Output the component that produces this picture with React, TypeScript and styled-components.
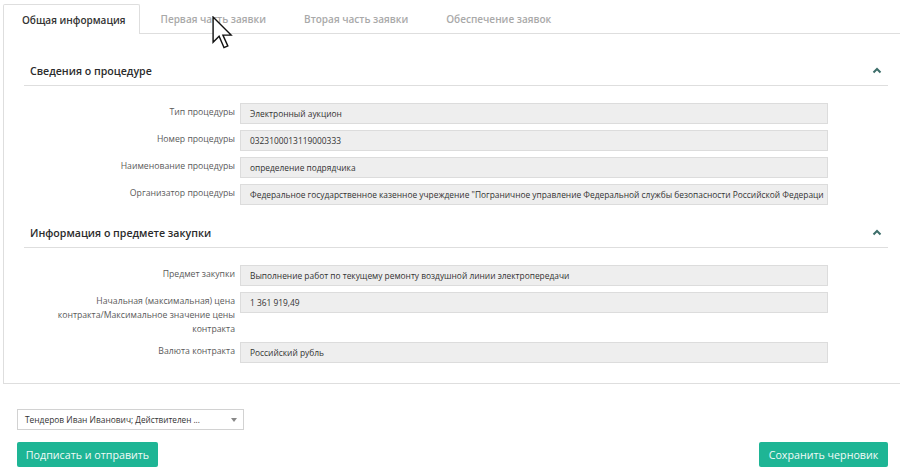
import React from "react";
import styled, { createGlobalStyle } from "styled-components";

const Global = createGlobalStyle`
  html, body { margin: 0; padding: 0; background: #fff; overflow: hidden; }
  body { font-family: "Open Sans", "Noto Sans", sans-serif; color: #333; }
  * { box-sizing: border-box; }
`;

const Page = styled.div`
  position: relative;
  width: 900px;
  height: 472px;
  padding: 3px 0 0 3px;
  overflow: hidden;
`;

const TabBar = styled.div`
  display: flex;
  align-items: flex-end;
  border-bottom: 1px solid #dedede;
  width: 910px;
`;

const Tab = styled.div<{ $active?: boolean }>`
  display: flex;
  align-items: center;
  height: 30px;
  margin-bottom: ${(p) => (p.$active ? "-1px" : "0")};
  margin-right: ${(p) => (p.$active ? "2px" : "0")};
  padding: ${(p) => (p.$active ? "0 13px 0 18px" : "0 18px")};
  font-size: 10px;
  font-weight: 600;
  color: ${(p) => (p.$active ? "#333" : "#a9a9a9")};
  background: #fff;
  border: 1px solid ${(p) => (p.$active ? "#dedede" : "transparent")};
  border-bottom: none;
  border-radius: 2px 2px 0 0;
  white-space: nowrap;
`;

const Panel = styled.div`
  width: 910px;
  border: 1px solid #dedede;
  border-top: none;
  padding: 22px 0 20px 0;
`;

const Section = styled.div`
  margin: 0 9px 0 20px;
  & + & {
    margin-top: 13px;
  }
`;

const SectionHeader = styled.div`
  display: flex;
  align-items: center;
  justify-content: space-between;
  height: 30px;
  padding: 0 6px;
  border-bottom: 1px solid #dedede;
  width: 864px;
`;

const SectionTitle = styled.div`
  font-size: 10.6px;
  font-weight: 600;
  color: #2b2b2b;
`;

const Chevron = styled.svg`
  width: 10px;
  height: 7px;
`;

const Fields = styled.div`
  display: grid;
  grid-template-columns: 211px 588px;
  column-gap: 5px;
  row-gap: 6px;
  padding-top: 17px;
`;

const Label = styled.div`
  text-align: right;
  font-size: 8.7px;
  line-height: 14px;
  padding: 2px 0 0 22px;
  color: #5a5a5a;
`;

const Value = styled.div`
  height: 21px;
  display: flex;
  align-items: center;
  padding-left: 9px;
  background: #eeeeee;
  border: 1px solid #dcdcdc;
  font-size: 8.4px;
  color: #333;
  white-space: nowrap;
  overflow: hidden;
`;

const Footer = styled.div`
  padding: 25px 12px 0 14px;
  display: flex;
  flex-direction: column;
  gap: 12px;
`;

const Select = styled.div`
  width: 227px;
  height: 21px;
  border: 1px solid #d2d2d2;
  display: flex;
  align-items: center;
  justify-content: space-between;
  padding: 0 6px 0 7px;
  font-size: 8.4px;
  color: #333;
  white-space: nowrap;
`;

const Small = styled.span`
  font-size: 8.2px;
`;

const Arrow = styled.span`
  width: 0;
  height: 0;
  border-left: 3px solid transparent;
  border-right: 3px solid transparent;
  border-top: 4px solid #888;
`;

const ButtonRow = styled.div`
  display: flex;
  justify-content: space-between;
`;

const Button = styled.button<{ $w: number }>`
  width: ${(p) => p.$w}px;
  height: 25px;
  background: #1eb595;
  border: none;
  border-radius: 2px;
  color: #f2fbf8;
  font-family: "Open Sans", "Noto Sans", sans-serif;
  font-size: 10.7px;
  padding: 0;
`;

const Cursor = styled.svg`
  position: absolute;
  left: 212px;
  top: 16px;
  width: 24px;
  height: 36px;
`;

const ChevronUp = () => (
  <Chevron viewBox="0 0 10 7">
    <path d="M1.5 5.5 L5 2 L8.5 5.5" fill="none" stroke="#3d6e6a" strokeWidth="2" />
  </Chevron>
);

const sec1 = [
  ["Тип процедуры", "Электронный аукцион"],
  ["Номер процедуры", "0323100013119000333"],
  ["Наименование процедуры", "определение подрядчика"],
  [
    "Организатор процедуры",
    "Федеральное государственное казенное учреждение \"Пограничное управление Федеральной службы безопасности Российской Федераци",
  ],
];

const sec2 = [
  ["Предмет закупки", "Выполнение работ по текущему ремонту воздушной линии электропередачи"],
  [
    "Начальная (максимальная) цена контракта/\u2060Максимальное значение цены контракта",
    "1 361 919,49",
  ],
  ["Валюта контракта", "Российский рубль"],
];

export default function App() {
  return (
    <Page>
      <Global />
      <TabBar>
        <Tab $active>Общая информация</Tab>
        <Tab>Первая часть заявки</Tab>
        <Tab>Вторая часть заявки</Tab>
        <Tab>Обеспечение заявок</Tab>
      </TabBar>
      <Panel>
        <Section>
          <SectionHeader>
            <SectionTitle>Сведения о процедуре</SectionTitle>
            <ChevronUp />
          </SectionHeader>
          <Fields>
            {sec1.map(([l, v]) => (
              <React.Fragment key={l}>
                <Label>{l}</Label>
                <Value>{v}</Value>
              </React.Fragment>
            ))}
          </Fields>
        </Section>
        <Section>
          <SectionHeader>
            <SectionTitle>Информация о предмете закупки</SectionTitle>
            <ChevronUp />
          </SectionHeader>
          <Fields>
            {sec2.map(([l, v]) => (
              <React.Fragment key={l}>
                <Label>{l}</Label>
                <Value>{v}</Value>
              </React.Fragment>
            ))}
          </Fields>
        </Section>
      </Panel>
      <Footer>
        <Select>
          <span>
            Тендеров Иван Иванович; <Small>Действителен ...</Small>
          </span>
          <Arrow />
        </Select>
        <ButtonRow>
          <Button $w={141}>Подписать и отправить</Button>
          <Button $w={129}>Сохранить черновик</Button>
        </ButtonRow>
      </Footer>
      <Cursor viewBox="0 0 22 33">
        <path
          d="M1 1 L1 24 L6.5 18.5 L11 29 L14.5 27.5 L10 17.5 L17.5 17.5 Z"
          fill="#fff"
          stroke="#111"
          strokeWidth="1.3"
          strokeLinejoin="miter"
        />
      </Cursor>
    </Page>
  );
}
